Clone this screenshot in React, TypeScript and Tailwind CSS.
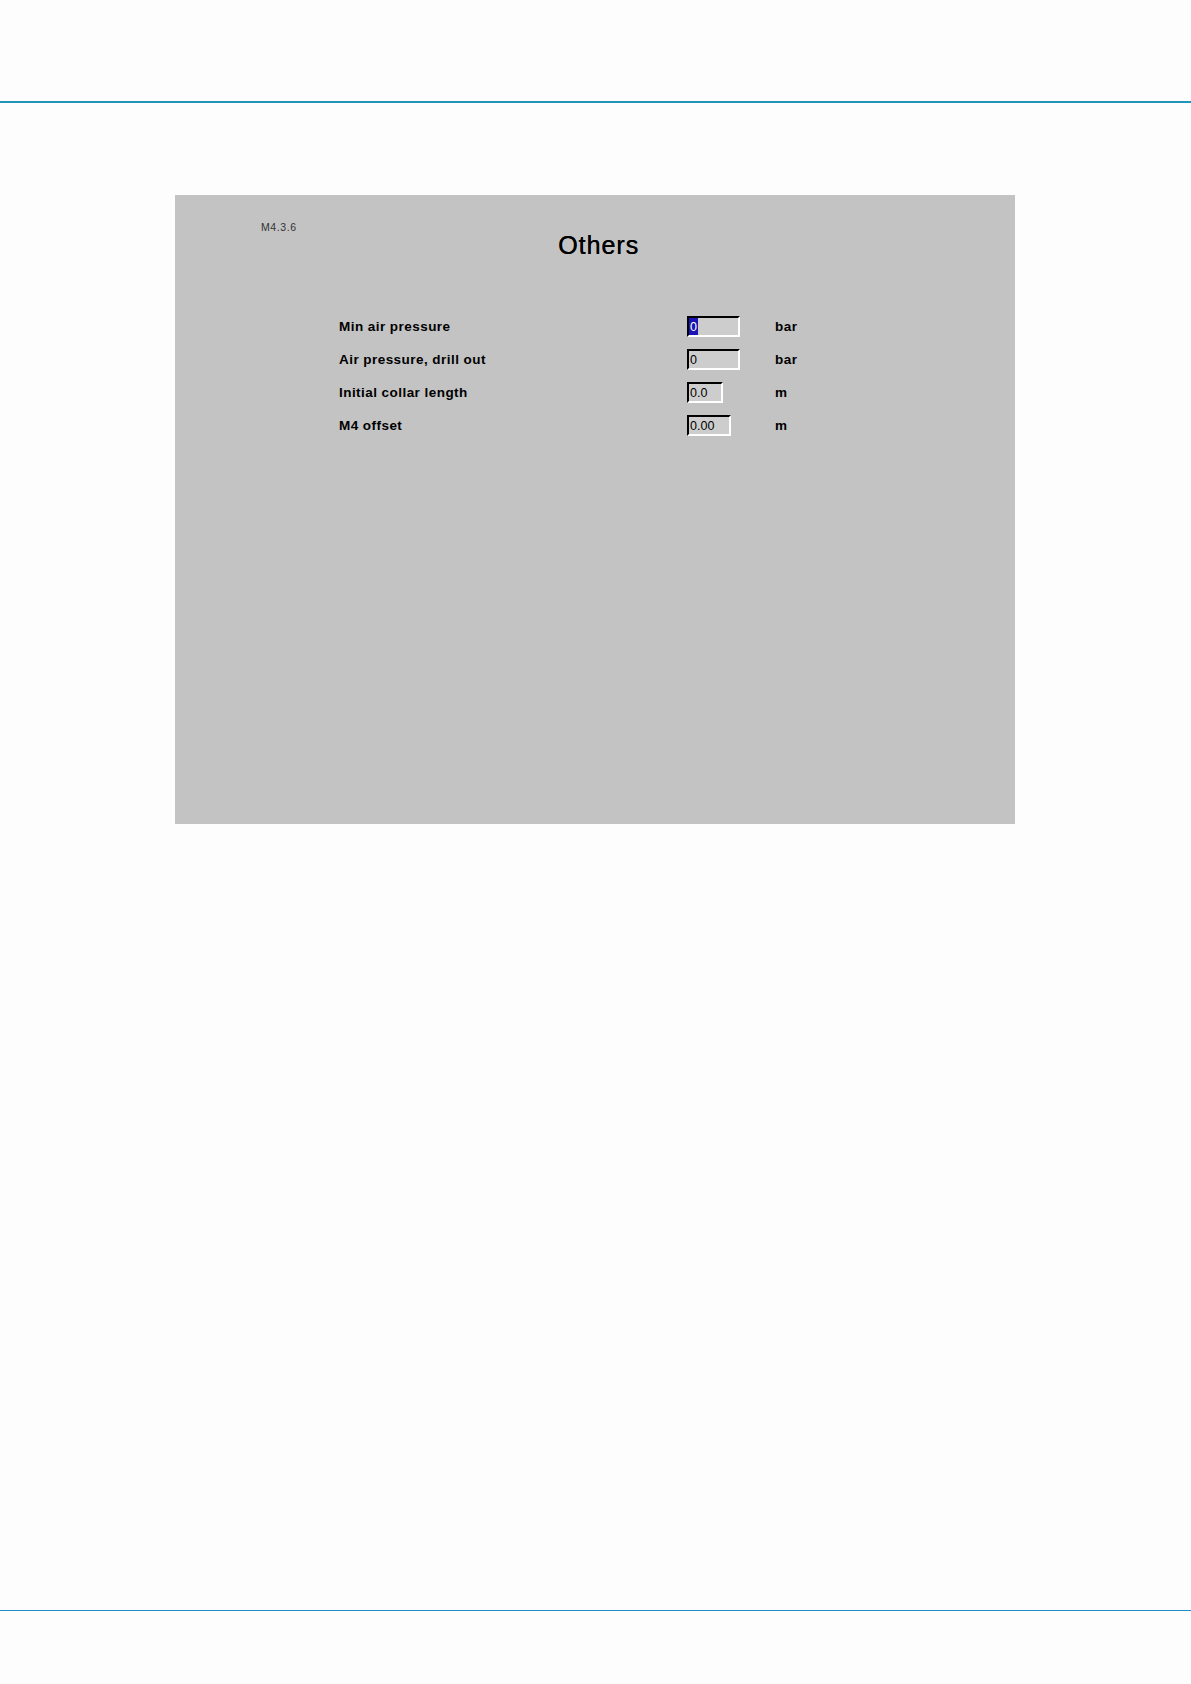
import React from "react";

const rows = [
  { label: "Min air pressure", value: "0", unit: "bar", width: "w-[53px]", selected: true },
  { label: "Air pressure, drill out", value: "0", unit: "bar", width: "w-[53px]", selected: false },
  { label: "Initial collar length", value: "0.0", unit: "m", width: "w-[36px]", selected: false },
  { label: "M4 offset", value: "0.00", unit: "m", width: "w-[44px]", selected: false },
];

function SunkenField({ value, width, selected }: { value: string; width: string; selected: boolean }) {
  return (
    <div
      className={`${width} h-[21px] flex items-stretch bg-[#cdcdcd] border-2 border-t-black border-l-black border-b-white border-r-white text-[12.5px] text-black leading-none`}
    >
      {selected ? (
        <span className="flex items-center pt-[2px] px-[1px] bg-[#1a14b4] text-white">{value}</span>
      ) : (
        <span className="flex items-center pt-[2px] pl-[1px]">{value}</span>
      )}
    </div>
  );
}

export default function App() {
  return (
    <div className="min-h-[1684px] bg-[#fdfdfd] font-['Liberation_Sans',Arial,sans-serif] text-black">
      {/* top rule */}
      <div className="h-[101px]" />
      <div className="h-[2px] bg-[#2196ba]" />

      <div className="pt-[92px] pl-[175px]">
        {/* dialog panel */}
        <div className="w-[840px] h-[629px] bg-[#c3c3c3]">
          <div className="h-[115px] grid grid-cols-[383px_1fr]">
            <div className="pl-[86px] pt-[26px] text-[10.5px] tracking-[0.6px] text-[#333] leading-[12px]">M4.3.6</div>
            <div className="pt-[35px] text-[25px] tracking-[1px] leading-[30px] [text-shadow:0.4px_0_0_#000]">Others</div>
          </div>

          <div className="pl-[164px]">
            {rows.map((r) => (
              <div key={r.label} className="h-[33px] grid grid-cols-[348px_88px_auto] items-center">
                <span className="text-[13.5px] font-bold tracking-[0.45px] leading-none">{r.label}</span>
                <SunkenField value={r.value} width={r.width} selected={r.selected} />
                <span className="text-[13.5px] font-bold tracking-[0.45px] leading-none">{r.unit}</span>
              </div>
            ))}
          </div>
        </div>
      </div>

      {/* bottom rule */}
      <div className="h-[786px]" />
      <div className="h-[1px] bg-[#1e90c4]" />
    </div>
  );
}
